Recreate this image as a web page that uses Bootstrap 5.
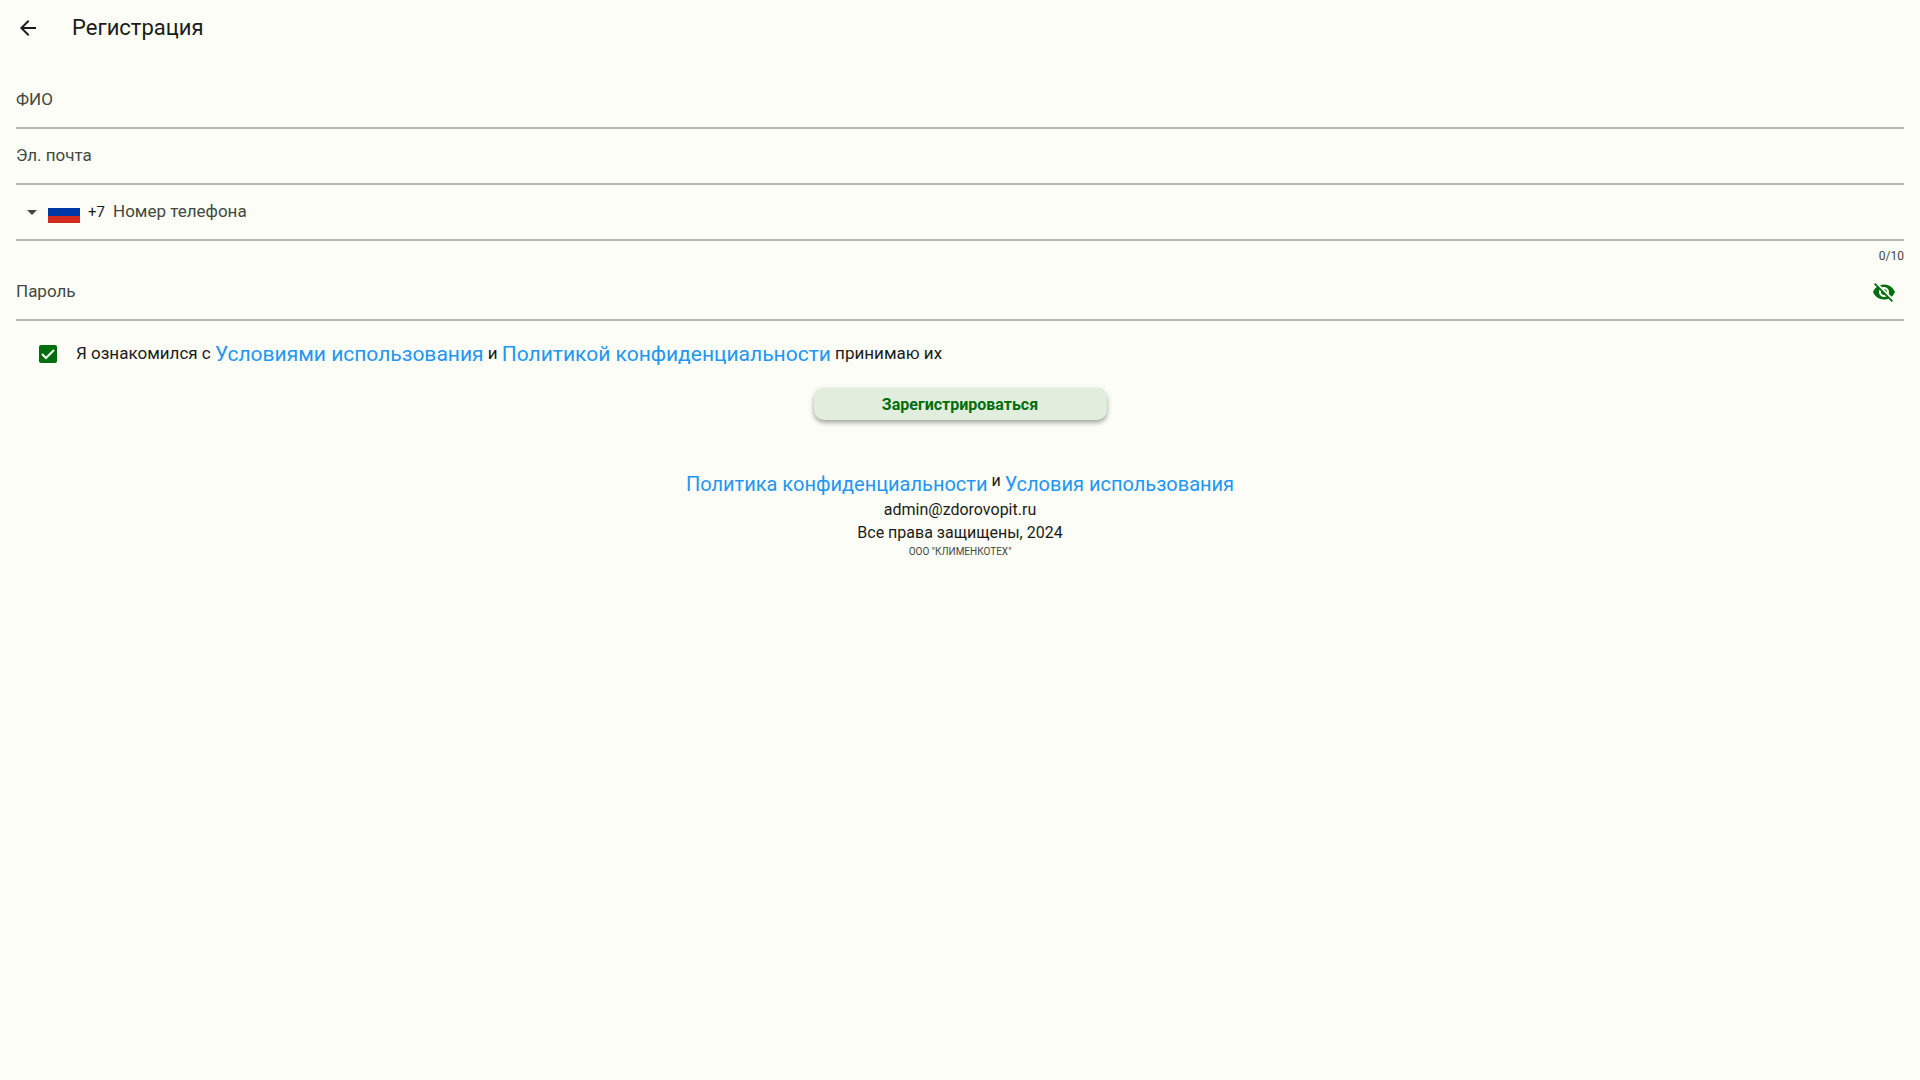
<!DOCTYPE html>
<html lang="ru">
<head>
<meta charset="utf-8">
<meta name="viewport" content="width=device-width, initial-scale=1">
<title>Регистрация</title>
<link href="https://cdn.jsdelivr.net/npm/bootstrap@5.3.0/dist/css/bootstrap.min.css" rel="stylesheet">
<style>
  body { background: #fcfdf6; color: #1a1c18; font-family: Roboto, "Noto Sans", sans-serif; font-size: 17px; line-height: 24px; }
  svg { display: block; flex: none; }
  .app-bar { height: 56px; gap: 32px; padding: 0 16px; }
  .app-title { font-size: 22px; line-height: 28px; }
  .icon-btn { border: 0; background: none; padding: 0; color: inherit; }
  .reg-form { padding: 17px 16px 0; }
  .field { height: 56px; border-bottom: 2px solid #b5b6b0; color: #424940; }
  .field label { padding-bottom: 2px; }
  .field input { border: 0; background: transparent; outline: 0; min-width: 0; height: 48px; color: #1a1c18; }
  .dial { appearance: none; border: 0; background: transparent; padding: 0; font-size: 15px; color: #1a1c18; margin: 0 8px; }
  .counter { font-size: 12px; line-height: 16px; height: 24px; padding-top: 7px; color: #424940; }
  .eye { color: #006e0c; margin-right: 8px; }
  .agree { padding: 0 23px; gap: 19px; height: 65px; margin-bottom: 2px; }
  .agree .form-check-input { width: 18px; height: 18px; margin: 0; border: 0; border-radius: 2px; flex: none; }
  .agree .form-check-input:checked { background-color: #006e0c; background-size: 18px;
    background-image: url("data:image/svg+xml,%3csvg xmlns='http://www.w3.org/2000/svg' viewBox='0 0 18 18'%3e%3cpath fill='none' stroke='%23fff' stroke-width='2' d='M3 9l4 4 8-8'/%3e%3c/svg%3e"); }
  .doc-link { font-size: 21px; color: #2196f3; text-decoration: none; vertical-align: -2px; }
  .submit-btn { width: 293px; height: 32px; padding: 2px 0 0; border: 0; border-radius: 10px; background: #e1eddd; color: #006e0c; font-size: 16px; font-weight: 700; line-height: 24px; box-shadow: 0 3px 4px rgba(0,0,0,.28), 0 1px 6px rgba(0,0,0,.1); }
  .submit-btn:hover { background: #d5e6d0; color: #006e0c; }
  .foot { padding-top: 47px; font-size: 16px; line-height: 23px; }
  .foot-links { line-height: 28px; }
  .foot-links .doc-link { font-size: 20px; vertical-align: middle; }
  .foot-links .joiner { vertical-align: 2px; }
  .firm { font-size: 10px; line-height: 15px; color: #424940; }
</style>
<script src="https://cdn.jsdelivr.net/npm/bootstrap@5.3.0/dist/js/bootstrap.bundle.min.js"></script>
</head>
<body>
<header class="app-bar d-flex align-items-center">
  <button class="icon-btn" type="button" aria-label="Назад">
    <svg width="24" height="24" viewBox="0 0 24 24" fill="currentColor"><path d="M20 11H7.83l5.59-5.59L12 4l-8 8 8 8 1.41-1.41L7.83 13H20v-2z"/></svg>
  </button>
  <h1 class="app-title fw-normal m-0">Регистрация</h1>
</header>
<main>
  <form class="reg-form">
    <div class="field d-flex align-items-center">
      <label for="fullname">ФИО</label>
      <input class="flex-grow-1" id="fullname" type="text">
    </div>
    <div class="field d-flex align-items-center">
      <label for="email">Эл. почта</label>
      <input class="flex-grow-1" id="email" type="email">
    </div>
    <div class="field d-flex align-items-center">
      <svg class="ms-1" width="24" height="24" viewBox="0 0 24 24" fill="currentColor"><path d="M7 10l5 5 5-5z"/></svg>
      <svg class="ms-1" width="32" height="22" viewBox="0 0 32 22"><path fill="#fff" d="M0 0h32v8H0z"/><path fill="#0039a6" d="M0 7h32v8H0z"/><path fill="#d52b1e" d="M0 15h32v7H0z"/></svg>
      <select class="dial" aria-label="Код страны"><option>+7</option></select>
      <label for="phone">Номер телефона</label>
      <input class="flex-grow-1" id="phone" type="tel" maxlength="10">
    </div>
    <div class="counter text-end">0/10</div>
    <div class="field d-flex align-items-center">
      <label for="password">Пароль</label>
      <input class="flex-grow-1" id="password" type="password">
      <button class="icon-btn eye" type="button" aria-label="Показать пароль">
        <svg width="24" height="24" viewBox="0 0 24 24" fill="currentColor"><path d="M12 7c2.76 0 5 2.24 5 5 0 .65-.13 1.26-.36 1.83l2.92 2.92c1.51-1.26 2.7-2.89 3.43-4.75-1.73-4.39-6-7.5-11-7.5-1.4 0-2.74.25-3.98.7l2.16 2.16C10.74 7.13 11.35 7 12 7zM2 4.27l2.28 2.28.46.46C3.08 8.3 1.78 10.02 1 12c1.73 4.39 6 7.5 11 7.5 1.55 0 3.03-.3 4.38-.84l.42.42L19.73 22 21 20.73 3.27 3 2 4.27zM7.53 9.8l1.55 1.55c-.05.21-.08.43-.08.65 0 1.66 1.34 3 3 3 .22 0 .44-.03.65-.08l1.55 1.55c-.67.33-1.41.53-2.2.53-2.76 0-5-2.24-5-5 0-.79.2-1.53.53-2.2zm4.31-.78l3.15 3.15.02-.16c0-1.66-1.34-3-3-3l-.17.01z"/></svg>
      </button>
    </div>
    <div class="agree d-flex align-items-center">
      <input class="form-check-input" id="agree" type="checkbox" checked>
      <div><label for="agree">Я ознакомился с</label> <a class="doc-link" href="#terms">Условиями использования</a> и <a class="doc-link" href="#privacy">Политикой конфиденциальности</a> принимаю их</div>
    </div>
    <div class="text-center"><button class="btn submit-btn" type="submit">Зарегистрироваться</button></div>
  </form>
</main>
<footer class="foot text-center">
  <div class="foot-links"><a class="doc-link" href="#privacy">Политика конфиденциальности</a> <span class="joiner">и</span> <a class="doc-link" href="#terms">Условия использования</a></div>
  <div>admin@zdorovopit.ru</div>
  <div>Все права защищены, 2024</div>
  <div class="firm">ООО "КЛИМЕНКОТЕХ"</div>
</footer>
</body>
</html>
